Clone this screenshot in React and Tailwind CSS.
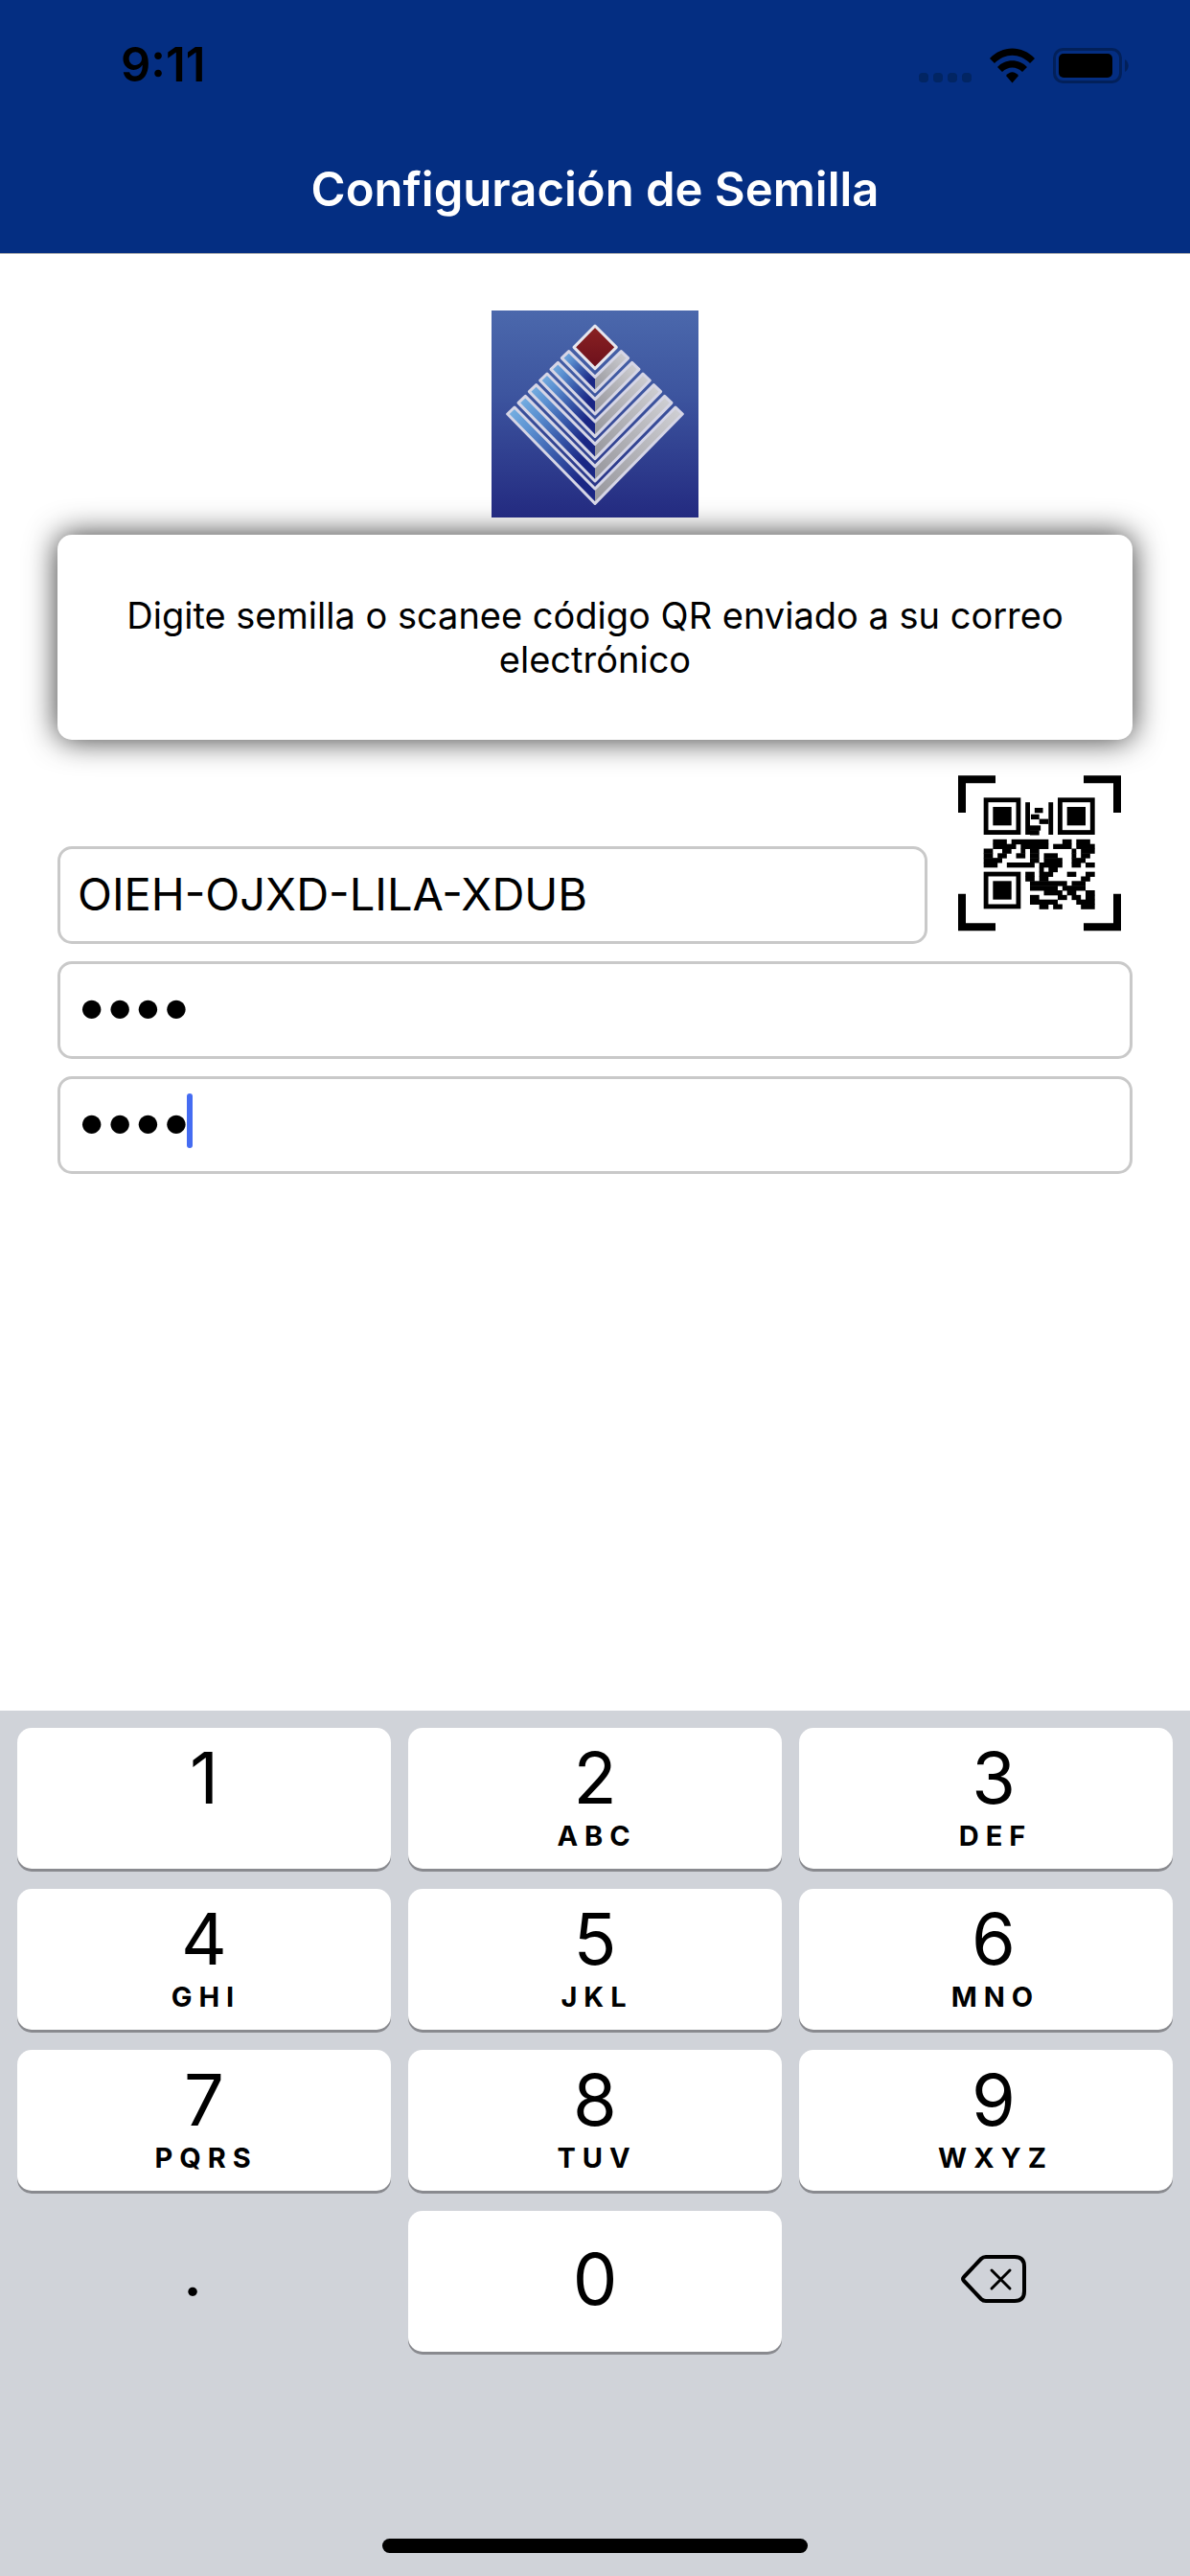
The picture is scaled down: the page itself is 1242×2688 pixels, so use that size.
import React, { useState } from "react";

const keys = [
  { digit: "1", letters: "" },
  { digit: "2", letters: "ABC" },
  { digit: "3", letters: "DEF" },
  { digit: "4", letters: "GHI" },
  { digit: "5", letters: "JKL" },
  { digit: "6", letters: "MNO" },
  { digit: "7", letters: "PQRS" },
  { digit: "8", letters: "TUV" },
  { digit: "9", letters: "WXYZ" },
];

// [row, first column, number of modules]
const qrRuns = [
  [2.2, 11, 1.8], [3.6, 10.2, 1.8], [4.6, 12, 2], [6, 10, 2.3], [7, 10, 2],
  [9, 2, 3], [9, 6, 8], [9, 17, 2], [9, 20, 3],
  [10, 2, 5], [10, 8, 6], [10, 15, 4], [10, 20, 4],
  [11, 0, 2], [11, 4, 2], [11, 8, 1], [11, 10, 2], [11, 19, 1], [11, 21, 3],
  [12, 0, 2], [12, 3, 2], [12, 7, 2], [12, 10, 2], [12, 13, 3], [12, 19, 1], [12, 21, 2],
  [13, 0, 4], [13, 10, 2], [13, 13, 4], [13, 19, 3],
  [14, 0, 3], [14, 5, 6], [14, 12, 5], [14, 19, 2], [14, 22, 2],
  [15, 12, 1], [15, 14, 2],
  [16, 9, 2], [16, 12, 3], [16, 18, 2], [16, 22, 2],
  [17, 9, 2], [17, 12, 2], [17, 21, 2],
  [18, 10, 8], [18, 19, 3],
  [19, 10, 6], [19, 17, 5],
  [20, 13, 4], [20, 18, 2], [20, 22, 2],
  [21, 10, 2], [21, 16, 2], [21, 19, 2], [21, 22, 2],
  [22, 10, 6], [22, 20, 4],
  [23, 12, 2], [23, 15, 2], [23, 21, 3],
];

const StatusIcons = () => (
  <svg className="h-[38px] w-[220px]" viewBox="957 48 220 38" aria-hidden="true">
    <g fill="#022563">
      <rect x="958" y="75" width="10" height="10" rx="4" />
      <rect x="973" y="75" width="10" height="10" rx="4" />
      <rect x="988" y="75" width="10" height="10" rx="4" />
      <rect x="1003" y="75" width="10" height="10" rx="4" />
    </g>
    <path d="M1032 60 C1045 46 1066 46 1079 60 L1074 65 C1063 54 1048 54 1037 65 Z" />
    <path d="M1040 69 C1048 60 1063 60 1071 69 L1066 74 C1060 68 1051 68 1045 74 Z" />
    <path d="M1049 78 C1053 73 1058 73 1062 78 L1055.500 85.500 Z" />
    <rect x="1099.500" y="50.500" width="69" height="34" rx="9" fill="none" stroke="#02205a" strokeWidth="3" />
    <rect x="1104" y="55" width="56" height="25" rx="5" />
    <path d="M1173 61 C1178 64 1178 71 1173 74 Z" fill="#02205a" />
  </svg>
);

const Logo = () => (
  <svg className="relative z-10 size-[216px]" viewBox="39 42 648 648" role="img" aria-label="Logo">
    <defs>
      <linearGradient id="sky" x1="0" y1="0" x2="0" y2="1">
        <stop offset="0" stopColor="#4b68ac" />
        <stop offset="0.4" stopColor="#3d559f" />
        <stop offset="1" stopColor="#232a80" />
      </linearGradient>
      <linearGradient id="wing" x1="0" y1="0" x2="1" y2="1">
        <stop offset="0" stopColor="#7ab4e4" />
        <stop offset="0.25" stopColor="#5a8fd0" />
        <stop offset="0.5" stopColor="#3a5cac" />
        <stop offset="0.8" stopColor="#1a2684" />
      </linearGradient>
      <linearGradient id="steel" x1="1" y1="0" x2="0" y2="1">
        <stop offset="0" stopColor="#d0d0d4" />
        <stop offset="1" stopColor="#96969c" />
      </linearGradient>
      <linearGradient id="ruby" x1="0" y1="0" x2="0" y2="1">
        <stop offset="0" stopColor="#8a2222" />
        <stop offset="1" stopColor="#6c0f1c" />
      </linearGradient>
    </defs>
    <rect x="39" y="42" width="648" height="648" fill="url(#sky)" />
    {[0, 1, 2, 3, 4, 5].map((n) => {
      const x = 259 - 34 * n;
      const y = 191 + 35 * n;
      const bottom = 296 + 70 * n;
      return (
        <g key={n} strokeLinejoin="round">
          <path
            d={`M${x} ${y} L${x + 22} ${y - 21} L363 ${bottom - 46} V${bottom} Z`}
            fill="url(#wing)"
          />
          <path
            d={`M${726 - x} ${y} L${704 - x} ${y - 21} L363 ${bottom - 46} V${bottom} Z`}
            fill="url(#steel)"
          />
          <path
            d={`M${x} ${y} L${x + 22} ${y - 21} L363 ${bottom - 46} L${704 - x} ${y - 21} L${726 - x} ${y} L363 ${bottom} Z`}
            fill="none"
            stroke="#d6d6e6"
            strokeWidth="9"
          />
        </g>
      );
    })}
    <path d="M363 90 L430 157 L363 224 L297 157 Z" fill="url(#ruby)" stroke="#e6e6ee" strokeWidth="9" strokeLinejoin="round" />
  </svg>
);

const QrIcon = () => (
  <svg className="h-[163px] w-[170px]" viewBox="62 58 510 487" aria-hidden="true">
    <g fill="none" stroke="#000" strokeWidth="24">
      <path d="M179 70 H74 V174" />
      <path d="M455 70 H560 V174" />
      <path d="M179 532 H74 V428" />
      <path d="M455 532 H560 V428" />
    </g>
    <g transform="translate(142 127) scale(14.5)">
      {[[0, 0], [16, 0], [0, 16]].map(([x, y]) => (
        <g key={`${x}-${y}`}>
          <rect x={x + 0.5} y={y + 0.5} width="7" height="7" fill="none" stroke="#000" />
          <rect x={x + 2} y={y + 2} width="4" height="4" />
        </g>
      ))}
      <rect x="9" y="1" width="1" height="7" />
      <rect x="14" y="1" width="1" height="7" />
      {qrRuns.map(([row, col, size], index) => (
        <rect key={index} x={col} y={row} width={size} height="1.1" />
      ))}
    </g>
  </svg>
);

const BackspaceIcon = () => (
  <svg className="h-[50px] w-[68px]" viewBox="0 0 68 50" fill="none" stroke="#000" strokeWidth="4" strokeLinecap="round" strokeLinejoin="round" aria-hidden="true">
    <path d="M26 2 H56 Q66 2 66 12 V38 Q66 48 56 48 H26 Q23 48 21 46 L3 27 Q1 25 3 23 L21 4 Q23 2 26 2 Z" />
    <path d="M32 16 L51 35 M51 16 L32 35" strokeWidth="3" />
  </svg>
);

const inputClass =
  "block h-[102px] w-full min-w-0 rounded-[15px] border-3 border-[#c9c9c9] bg-white px-[18px] outline-none";

const pinClass = "pb-3 text-[62px] font-bold";

const keyClass =
  "flex h-[147px] flex-col items-center rounded-[15px] bg-white shadow-[0_3px_0_#898a8f]";

const App = () => {
  const [seed, setSeed] = useState("OIEH-OJXD-LILA-XDUB");
  const [pin, setPin] = useState("1234");
  const [confirm, setConfirm] = useState("1234");

  return (
    <div className="flex min-h-screen flex-col bg-white font-['Inter','Liberation_Sans',sans-serif] text-black">
      <header className="border-b border-[#a2a5ab] bg-[#042e82]">
        <div className="flex h-[132px] items-center justify-between pt-1 pr-16 pl-[126px]">
          <span className="text-[49px] font-semibold">9:11</span>
          <StatusIcons />
        </div>
        <h1 className="flex h-[132px] items-center justify-center text-[49px] font-semibold text-white">
          Configuración de Semilla
        </h1>
      </header>

      <main className="flex flex-1 flex-col px-[60px] pt-[59px]">
        <div className="flex justify-center">
          <Logo />
        </div>
        <p className="mt-[18px] rounded-[15px] bg-white px-[60px] py-[61px] text-center text-[38px] leading-[46px] shadow-[0_0_32px_rgba(0,0,0,0.8)]">
          Digite semilla o scanee código QR enviado a su correo electrónico
        </p>

        <form className="mt-[37px] flex flex-col gap-[18px]" onSubmit={(e) => e.preventDefault()}>
          <div className="flex items-end gap-8">
            <input
              className={`${inputClass} flex-1 pb-1 text-[47px]`}
              type="text"
              aria-label="Semilla"
              value={seed}
              onChange={(e) => setSeed(e.target.value)}
            />
            <button type="button" className="mr-3 pb-[13px]" aria-label="Escanear código QR">
              <QrIcon />
            </button>
          </div>
          <input
            className={`${inputClass} ${pinClass}`}
            type="password"
            aria-label="PIN"
            value={pin}
            onChange={(e) => setPin(e.target.value)}
          />
          <div className="relative">
            <input
              className={`${inputClass} ${pinClass}`}
              type="password"
              aria-label="Confirmar PIN"
              value={confirm}
              onChange={(e) => setConfirm(e.target.value)}
            />
            <span className="absolute top-[18px] left-[135px] h-[57px] w-1.5 rounded-full bg-[#456cf2]" />
          </div>
        </form>
      </main>

      <section className="bg-[#d0d3d9] px-[18px] pt-[18px] pb-6" aria-label="Teclado">
        <div className="grid grid-cols-3 gap-x-[18px] gap-y-[21px]">
          {keys.map((key, index) => (
            <button
              key={key.digit}
              type="button"
              className={`${keyClass} pt-4 ${index % 3 === 2 ? "pl-4" : ""}`}
            >
              <span className="text-[74px] leading-[72px]">{key.digit}</span>
              <span className="pl-1 text-[29px] leading-[50px] font-bold tracking-[0.24em]">{key.letters}</span>
            </button>
          ))}
          <button type="button" className="flex h-[147px] items-center justify-center pr-6 pb-4 text-[60px] font-semibold">
            .
          </button>
          <button type="button" className={`${keyClass} justify-center pb-1.5`}>
            <span className="text-[74px] leading-[72px]">0</span>
          </button>
          <button type="button" className="flex h-[147px] items-center justify-center pb-1.5 pl-4" aria-label="Borrar">
            <BackspaceIcon />
          </button>
        </div>
        <div className="mx-auto mt-[195px] h-[15px] w-[444px] rounded-full bg-black" />
      </section>
    </div>
  );
};

export default App;
